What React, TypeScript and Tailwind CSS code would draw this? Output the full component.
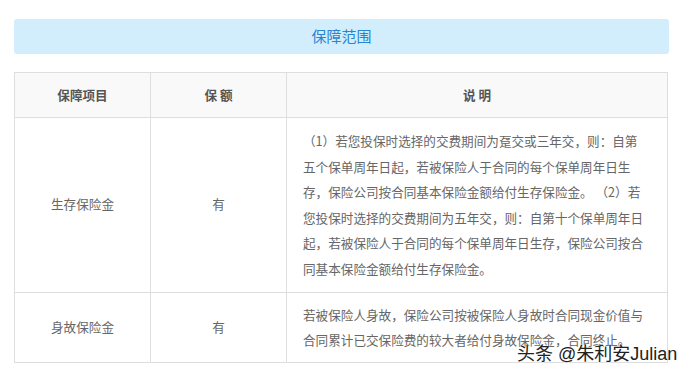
import React from "react";

const font = { fontFamily: '"Noto Sans CJK SC", "Microsoft YaHei", sans-serif' };

export default function App() {
  return (
    <div className="relative w-[689px] h-[376px] bg-white overflow-hidden" style={font}>
      <div className="pt-[19px] pl-[14px]">
        <div className="w-[655px] h-[35px] rounded-[3px] bg-[#d2eefd] flex items-center justify-center text-[15px] text-[#2a84cf]">
          保障范围
        </div>
        <div className="mt-[18px] w-[654px] border-t border-l border-[#dedede] text-[12.6px] text-[#666]">
          <div className="grid grid-cols-[136px_136px_381px] bg-[#f9f9f9] font-bold text-[#555]">
            <div className="h-[45px] border-r border-b border-[#dedede] flex items-center justify-center">保障项目</div>
            <div className="h-[45px] border-r border-b border-[#dedede] flex items-center justify-center">保 额</div>
            <div className="h-[45px] border-r border-b border-[#dedede] flex items-center justify-center">说 明</div>
          </div>
          <div className="grid grid-cols-[136px_136px_381px]">
            <div className="border-r border-b border-[#dedede] flex items-center justify-center">生存保险金</div>
            <div className="border-r border-b border-[#dedede] flex items-center justify-center">有</div>
            <div className="border-r border-b border-[#dedede] pl-[16px] pr-[20px] py-[10px] leading-[25.6px]">
              （1）若您投保时选择的交费期间为趸交或三年交，则：自第五个保单周年日起，若被保险人于合同的每个保单周年日生存，保险公司按合同基本保险金额给付生存保险金。 （2）若您投保时选择的交费期间为五年交，则：自第十个保单周年日起，若被保险人于合同的每个保单周年日生存，保险公司按合同基本保险金额给付生存保险金。
            </div>
          </div>
          <div className="grid grid-cols-[136px_136px_381px]">
            <div className="border-r border-b border-[#dedede] flex items-center justify-center">身故保险金</div>
            <div className="border-r border-b border-[#dedede] flex items-center justify-center">有</div>
            <div className="border-r border-b border-[#dedede] pl-[16px] pr-[20px] py-[9px] leading-[25.6px]">
              若被保险人身故，保险公司按被保险人身故时合同现金价值与合同累计已交保险费的较大者给付身故保险金，合同终止。
            </div>
          </div>
        </div>
      </div>
      <div
        className="absolute left-[517px] top-[342px] text-[18px] leading-[24px] text-[#222] whitespace-nowrap"
        style={{
          fontFamily: '"Liberation Sans", "Noto Sans CJK SC", sans-serif',
          textShadow: "0 0 2px #fff, 0 0 1px #fff",
        }}
      >
        头条 @朱利安Julian
      </div>
    </div>
  );
}
